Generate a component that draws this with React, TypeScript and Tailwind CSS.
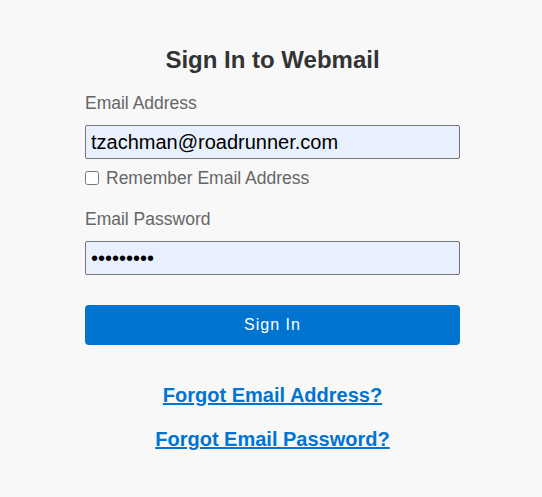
import React, { useState } from "react";

const App: React.FC = () => {
  const [email, setEmail] = useState("tzachman@roadrunner.com");
  const [password, setPassword] = useState("123456789");
  const [remember, setRemember] = useState(false);

  return (
    <div className="min-h-[497px] w-full bg-[#f8f8f8] pl-[85px] pr-[82px] font-['Liberation_Sans',Arial,sans-serif]">
      <div className="flex w-full flex-col pt-[44px]">
        <h1 className="text-center text-[24px] font-bold leading-[32px] text-[#333333]">
          Sign In to Webmail
        </h1>

        <label className="mt-[15px] text-[17.5px] leading-[24px] text-[#666666]">
          Email Address
        </label>
        <input
          type="text"
          value={email}
          onChange={(e) => setEmail(e.target.value)}
          className="mt-[10px] h-[34px] w-full rounded-[2px] border border-[#767676] bg-[#e8f0fe] px-[5px] text-[20px] text-black outline-none"
        />
        <label className="mt-[7px] flex items-center text-[17.5px] leading-[24px] text-[#666666]">
          <input
            type="checkbox"
            checked={remember}
            onChange={(e) => setRemember(e.target.checked)}
            className="m-0 mr-[7px] h-[14px] w-[14px]"
          />
          Remember Email Address
        </label>

        <label className="mt-[17px] text-[17.5px] leading-[24px] text-[#666666]">
          Email Password
        </label>
        <input
          type="password"
          value={password}
          onChange={(e) => setPassword(e.target.value)}
          className="mt-[10px] h-[34px] w-full rounded-[2px] border border-[#767676] bg-[#e8f0fe] px-[5px] text-[20px] text-black outline-none"
        />

        <button
          type="button"
          className="mt-[30px] h-[40px] w-full rounded-[4px] bg-[#0074d0] text-[16px] tracking-[1px] text-white"
        >
          Sign In
        </button>

        <a
          href="#"
          className="mt-[37px] self-center text-[20px] font-bold leading-[26px] text-[#0074d0] underline"
        >
          Forgot Email Address?
        </a>
        <a
          href="#"
          className="mt-[18px] self-center text-[20px] font-bold leading-[26px] text-[#0074d0] underline"
        >
          Forgot Email Password?
        </a>
      </div>
    </div>
  );
};

export default App;
